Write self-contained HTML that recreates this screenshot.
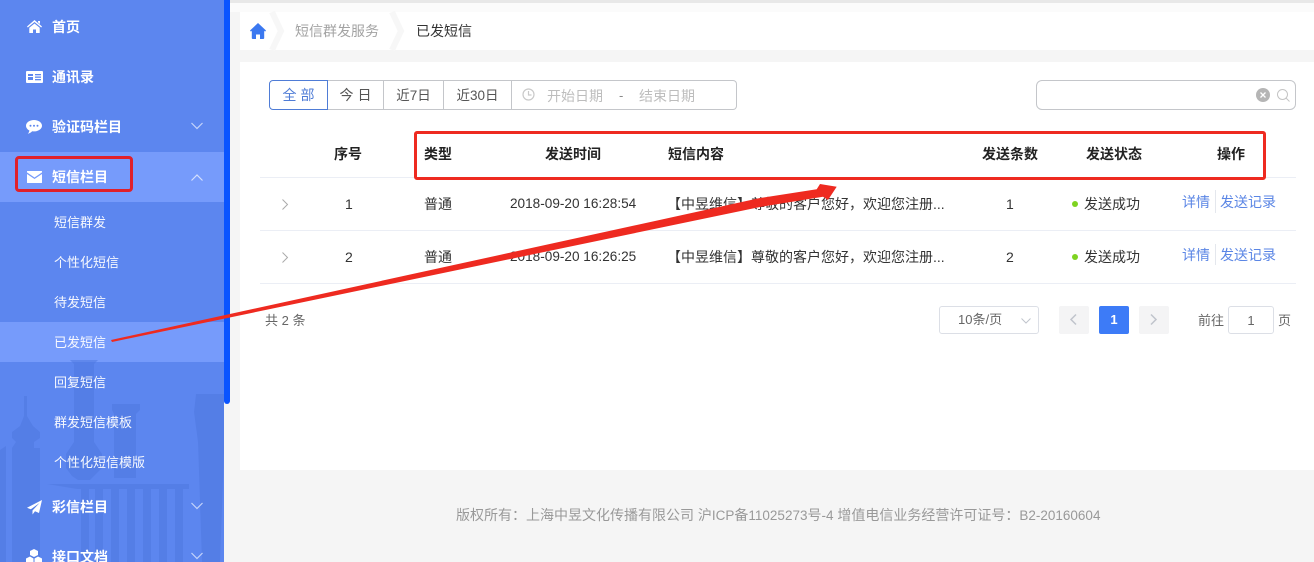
<!DOCTYPE html>
<html lang="zh">
<head>
<meta charset="utf-8">
<style>
html,body{margin:0;padding:0}
body{width:1314px;height:562px;overflow:hidden;position:relative;background:#f5f5f5;font-family:"Liberation Sans","Noto Sans CJK SC",sans-serif;font-size:13px;color:#333}
div{position:absolute;white-space:nowrap;box-sizing:border-box}
.p{font-family:"Noto Sans CJK TC",sans-serif}
.t{height:20px;line-height:20px}
.c{text-align:center}
.m{left:52px;width:120px;color:#fff;font-size:14px;font-weight:700;height:20px;line-height:20px}
.s{left:54px;color:#fff;font-size:13px;height:20px;line-height:20px;opacity:.95}
.h{font-weight:700;color:#222;font-size:14px;top:144px;height:20px;line-height:20px}
.r{color:#333;font-size:14px;height:20px;line-height:20px}
.d{font-size:13.6px}
.l{color:#5b86e5;font-size:14px;height:20px;line-height:20px}
.line{left:260px;width:1036px;height:1px;background:#ebeef5}
.dot{width:6px;height:6px;border-radius:50%;background:#7ed321;left:1072px}
.seg{top:80px;height:30px;line-height:29px;text-align:center;border:1px solid #c4c6ca;border-left:none;color:#555;font-size:13.5px}
.pg{top:306px;width:30px;height:28px;background:#f4f4f5;border-radius:2px}
svg{position:absolute;overflow:visible}
</style>
</head>
<body>
<!-- top strip -->
<div style="left:230px;top:0;width:1084px;height:3px;background:#e8e8e8"></div>
<div style="left:230px;top:3px;width:1084px;height:9px;background:#fbfbfb"></div>

<!-- sidebar -->
<div style="left:0;top:0;width:224px;height:562px;background:#5c86ef;overflow:hidden">
  <div style="left:0;top:152px;width:224px;height:50px;background:#769bfb"></div>
  <div style="left:0;top:322px;width:224px;height:40px;background:#769bfb"></div>
  <svg style="left:0;top:360px" width="224" height="202" fill="#4f78e0" opacity=".55">
    <path d="M24 36h3v20l6 10 7 6v6l-6 4v6h6v114H12V88l4-6-4-4v-6l8-6 4-10z"/>
    <path d="M70 0h28l-4 4v78l8 12v14l-8 8-4 4H78l-6-4-6-8V94l8-12V4z"/>
    <path d="M112 44h28v6l-4 4v64h-22V54l-2-4z"/>
    <path d="M47 124h142v5h-6v73h-8v-73h-8v73h-8v-73h-8v73h-8v-73h-8v73h-8v-73h-8v73h-8v-73h-8v73h-8v-73h-6v73h-8v-73h-4z"/>
    <path d="M196 34h28v58l-4 110h-18l-2-60-2-60-4-30z"/>
    <path d="M0 90l6-4v116H0z"/>
  </svg>

  <!-- icons -->
  <svg style="left:27px;top:20px" width="15" height="13" viewBox="0 0 15 13" fill="#fff"><path d="M7.500 0L15 6.500l-.8 1L7.500 2 .8 7.500 0 6.500zM2.300 7.800L7.500 3.500l5.200 4.300V13H9V9.500H6V13H2.300zM11 1h2v3l-2-1.600z"/></svg>
  <svg style="left:26px;top:71px" width="17" height="12" viewBox="0 0 17 12"><rect width="17" height="12" rx="1" fill="#fff"/><rect x="2" y="3" width="5" height="2" fill="#5c86ef"/><rect x="2" y="6" width="5" height="3" fill="#5c86ef"/><rect x="9" y="3" width="6" height="1.300" fill="#5c86ef"/><rect x="9" y="5.500" width="6" height="1.300" fill="#5c86ef"/><rect x="9" y="8" width="6" height="1.300" fill="#5c86ef"/></svg>
  <svg style="left:26px;top:120px" width="16" height="14" viewBox="0 0 16 14"><path d="M8 0c4.400 0 8 2.500 8 5.700s-3.600 5.700-8 5.700c-.6 0-1.200 0-1.800-.1C5 12.600 3.400 13.500 1.800 13.800c.9-1 1.500-2 1.600-3.300C1.300 9.500 0 7.700 0 5.700 0 2.500 3.600 0 8 0z" fill="#fff"/><circle cx="4.500" cy="5.700" r="1" fill="#5c86ef"/><circle cx="8" cy="5.700" r="1" fill="#5c86ef"/><circle cx="11.500" cy="5.700" r="1" fill="#5c86ef"/></svg>
  <svg style="left:27px;top:171px" width="15" height="12" viewBox="0 0 15 12" fill="#fff"><path d="M.3 0h14.400c.2 0 .3.200.3.400v1L7.500 6.500 0 1.400V.4C0 .2.100 0 .3 0zM0 3l7.500 5L15 3v8.500c0 .3-.2.500-.5.500H.5c-.3 0-.5-.2-.5-.5z"/></svg>
  <svg style="left:27px;top:500px" width="15" height="15" viewBox="0 0 15 15" fill="#fff"><path d="M15 0L12 13 8 11.200 5.500 14.500V10.500L12.500 3 3.800 9.300 0 7.800z"/></svg>
  <svg style="left:25px;top:549px" width="18" height="16" viewBox="0 0 18 16" fill="#fff"><path d="M9 0l4 2v4L9 8 5 6V2zM5 7.500l3.500 2v4l-3.500 2-4-2v-4zM13 7.500l4 2v4l-4 2-3.500-2v-4z"/></svg>

  <div class="m" style="top:17px">首页</div>
  <div class="m" style="top:67px">通讯录</div>
  <div class="m" style="top:117px">验证码栏目</div>
  <div class="m" style="top:167px">短信栏目</div>
  <div class="s" style="top:213px">短信群发</div>
  <div class="s" style="top:253px">个性化短信</div>
  <div class="s" style="top:293px">待发短信</div>
  <div class="s" style="top:333px">已发短信</div>
  <div class="s" style="top:373px">回复短信</div>
  <div class="s" style="top:413px">群发短信模板</div>
  <div class="s" style="top:453px">个性化短信模版</div>
  <div class="m" style="top:497px">彩信栏目</div>
  <div class="m" style="top:547px">接口文档</div>

  <svg style="left:191px;top:122px" width="12" height="8" fill="none" stroke="#c5d4fa" stroke-width="1.200"><path d="M.5 1L6 6.500 11.500 1"/></svg>
  <svg style="left:191px;top:174px" width="12" height="8" fill="none" stroke="#d5e0fc" stroke-width="1.200"><path d="M.5 6.500L6 1l5.500 5.500"/></svg>
  <svg style="left:191px;top:502px" width="12" height="8" fill="none" stroke="#c5d4fa" stroke-width="1.200"><path d="M.5 1L6 6.500 11.500 1"/></svg>
  <svg style="left:191px;top:552px" width="12" height="8" fill="none" stroke="#c5d4fa" stroke-width="1.200"><path d="M.5 1L6 6.500 11.500 1"/></svg>
</div>
<!-- scrollbar -->
<div style="left:224px;top:0;width:6px;height:404px;background:#0a54ff;border-radius:0 0 3px 3px"></div>

<!-- breadcrumb -->
<div style="left:240px;top:12px;width:1074px;height:38px;background:#fff"></div>
<svg style="left:240px;top:12px" width="170" height="38" fill="none" stroke="#f7f7f7" stroke-width="6"><path d="M32 0l9 19-9 19"/><path d="M152 0l9 19-9 19"/></svg>
<svg style="left:250px;top:23px" width="16" height="16" viewBox="0 0 16 16" fill="#3b78f0"><path d="M8 0l8 7.500-.9 1.100-.9-.8V15c0 .6-.4 1-1 1H10v-4.500H6V16H2.800c-.6 0-1-.4-1-1V7.800l-.9.800L0 7.500z"/></svg>
<div class="t" style="left:295px;top:21px;font-size:14px;color:#a3a3a3">短信群发服务</div>
<div class="t" style="left:416px;top:21px;font-size:14px;color:#333">已发短信</div>

<!-- card -->
<div style="left:240px;top:62px;width:1074px;height:408px;background:#fff"></div>

<!-- filter -->
<div class="seg" style="left:269px;width:59px;border:1px solid #4f7cd6;border-radius:4px 0 0 4px;color:#4f7cd6;font-size:14px;letter-spacing:4px;padding-left:4px">全部</div>
<div class="seg" style="left:328px;width:56px;font-size:14px;letter-spacing:4px;padding-left:4px">今日</div>
<div class="seg" style="left:384px;width:60px">近7日</div>
<div class="seg" style="left:444px;width:68px">近30日</div>
<div class="seg" style="left:512px;width:225px;border-radius:0 4px 4px 0"></div>
<svg style="left:522px;top:88px" width="13" height="13" fill="none" stroke="#c9c9c9" stroke-width="1.200"><circle cx="6.500" cy="6.500" r="5.500"/><path d="M6.500 3v4h3"/></svg>
<div class="t" style="left:547px;top:86px;font-size:14px;color:#bdbdbd">开始日期</div>
<div class="t" style="left:619px;top:86px;color:#888">-</div>
<div class="t" style="left:639px;top:86px;font-size:14px;color:#bdbdbd">结束日期</div>

<!-- search -->
<div style="left:1036px;top:80px;width:260px;height:30px;border:1px solid #c4c6ca;border-radius:6px"></div>
<svg style="left:1256px;top:88px" width="14" height="14"><circle cx="7" cy="7" r="7" fill="#b5b5b5"/><path d="M4.500 4.500l5 5M9.500 4.500l-5 5" stroke="#fff" stroke-width="1.300"/></svg>
<svg style="left:1277px;top:89px" width="13" height="13" fill="none" stroke="#c4c4c4" stroke-width="1"><circle cx="5.500" cy="5.500" r="5"/><path d="M9 9l3.500 3.500"/></svg>

<!-- table header -->
<div class="h" style="left:334px">序号</div>
<div class="h" style="left:424px">类型</div>
<div class="h" style="left:545px">发送时间</div>
<div class="h" style="left:668px">短信内容</div>
<div class="h" style="left:982px">发送条数</div>
<div class="h" style="left:1086px">发送状态</div>
<div class="h" style="left:1217px">操作</div>
<div class="line" style="top:177px"></div>
<div class="line" style="top:230px"></div>
<div class="line" style="top:283px"></div>

<!-- row 1 -->
<svg style="left:282px;top:199px" width="6" height="11" fill="none" stroke="#aaa"><path d="M.5.500l5 5-5 5"/></svg>
<div class="r" style="left:345px;top:194px">1</div>
<div class="r" style="left:424px;top:194px">普通</div>
<div class="r d" style="left:510px;top:194px">2018-09-20 16:28:54</div>
<div class="r" style="left:667px;top:194px">【中昱维信】尊敬的客户您好<span class="p">，</span>欢迎您注册...</div>
<div class="r" style="left:1006px;top:194px">1</div>
<div class="dot" style="top:201px"></div>
<div class="r" style="left:1084px;top:194px">发送成功</div>
<div class="l" style="left:1182px;top:192px">详情</div>
<div style="left:1215px;top:190px;width:1px;height:23px;background:#e4e7ed"></div>
<div class="l" style="left:1220px;top:192px">发送记录</div>

<!-- row 2 -->
<svg style="left:282px;top:252px" width="6" height="11" fill="none" stroke="#aaa"><path d="M.5.500l5 5-5 5"/></svg>
<div class="r" style="left:345px;top:247px">2</div>
<div class="r" style="left:424px;top:247px">普通</div>
<div class="r d" style="left:510px;top:247px">2018-09-20 16:26:25</div>
<div class="r" style="left:667px;top:247px">【中昱维信】尊敬的客户您好<span class="p">，</span>欢迎您注册...</div>
<div class="r" style="left:1006px;top:247px">2</div>
<div class="dot" style="top:254px"></div>
<div class="r" style="left:1084px;top:247px">发送成功</div>
<div class="l" style="left:1182px;top:245px">详情</div>
<div style="left:1215px;top:244px;width:1px;height:21px;background:#e4e7ed"></div>
<div class="l" style="left:1220px;top:245px">发送记录</div>

<!-- pagination -->
<div class="t" style="left:265px;top:311px;color:#666">共 2 条</div>
<div style="left:939px;top:306px;width:100px;height:28px;border:1px solid #dcdfe6;border-radius:3px"></div>
<div class="t" style="left:958px;top:310px;color:#666">10条/页</div>
<svg style="left:1021px;top:318px" width="10" height="6" fill="none" stroke="#c0c4cc"><path d="M.5.500L5 5 9.500.500"/></svg>
<div class="pg" style="left:1059px"></div>
<svg style="left:1070px;top:314px" width="7" height="11" fill="none" stroke="#c0c4cc" stroke-width="1.500"><path d="M6 .500L1 5.500l5 5"/></svg>
<div class="pg c" style="left:1099px;background:#3d7bf7;color:#fff;font-weight:700;line-height:28px">1</div>
<div class="pg" style="left:1139px"></div>
<svg style="left:1150px;top:314px" width="7" height="11" fill="none" stroke="#c0c4cc" stroke-width="1.500"><path d="M1 .500l5 5-5 5"/></svg>
<div class="t" style="left:1198px;top:311px;color:#666">前往</div>
<div class="c" style="left:1228px;top:306px;width:46px;height:28px;line-height:28px;border:1px solid #dcdfe6;border-radius:3px;color:#666">1</div>
<div class="t" style="left:1278px;top:311px;color:#666">页</div>

<!-- footer -->
<div class="t" style="left:456px;top:505px;color:#999;font-size:14px">版权所有<span class="p">：</span>上海中昱文化传播有限公司 沪<span style="font-size:13.5px">ICP</span>备<span style="font-size:13.5px">11025273</span>号<span style="font-size:13.5px">-4</span> 增值电信业务经营许可证号<span class="p">：</span><span style="font-size:13.5px">B2-20160604</span></div>

<!-- annotations -->
<div style="left:15px;top:156px;width:118px;height:36px;border:3px solid #e0202a;border-radius:4px"></div>
<div style="left:414px;top:131px;width:852px;height:49px;border:3px solid #ee2a20;border-radius:3px"></div>
<svg style="left:0;top:0" width="1314" height="562"><path d="M111 340L760 198 816.700 189.300 820 184 836.700 186.700 828 200 823 196.700 760 207 112 342z" fill="#ee2a20"/></svg>
</body>
</html>
